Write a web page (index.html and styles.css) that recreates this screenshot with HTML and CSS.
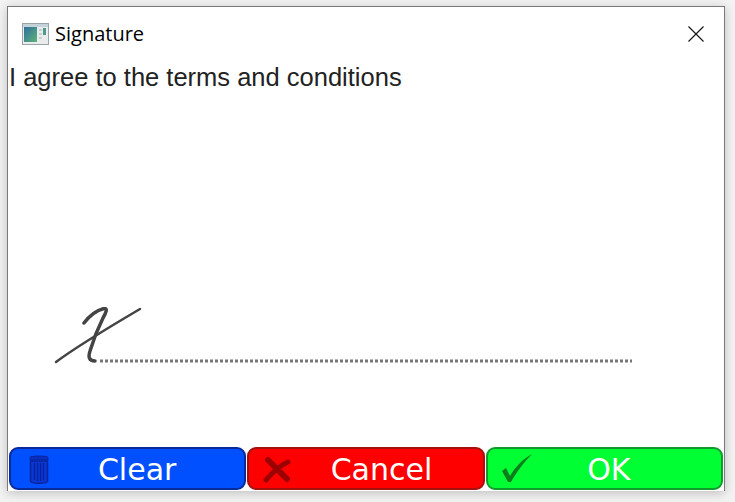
FILE: index.html
```html
<!DOCTYPE html>
<html lang="en">
<head>
<meta charset="utf-8">
<title>Signature</title>
<link rel="stylesheet" href="styles.css">
</head>
<body>
<main class="window">
  <header class="titlebar">
    <svg class="app-icon" viewBox="0 0 27 22" width="27" height="22" aria-hidden="true">
      <defs>
        <linearGradient id="pane" x1="0" y1="0" x2="1" y2="1">
          <stop offset="0" stop-color="#2f6f9c"/>
          <stop offset="1" stop-color="#5fb07a"/>
        </linearGradient>
      </defs>
      <rect x="0.5" y="0.5" width="26" height="21" fill="#e8ecec" stroke="#9aa3a8"/>
      <rect x="1" y="1" width="25" height="3" fill="#c4d2da"/>
      <rect x="2" y="4" width="13" height="15" fill="url(#pane)"/>
      <path d="M17 6h3v2h-3zM17 10h3v2h-3zM17 14h3v2h-3z" fill="#c9cfcf"/>
      <rect x="21" y="5" width="3" height="7" fill="#4f9a8a"/>
    </svg>
    <span class="title">Signature</span>
    <svg class="close" viewBox="0 0 16 16" width="16" height="16" aria-hidden="true">
      <path d="M0.5 0.5L15.5 15.5M15.5 0.5L0.5 15.5" stroke="#111" stroke-width="1.1" fill="none"/>
    </svg>
  </header>
  <p class="terms">I agree to the terms and conditions</p>
  <div class="signature">
    <svg viewBox="0 0 590 60" width="590" height="60" aria-hidden="true">
      <line x1="54" y1="54" x2="586" y2="54" class="dots"/>
      <path d="M10 55C30 40 60 22 94 2" class="ink"/>
      <path d="M38 16C44 8 52 3 58 1.500C62 1 60 6 57 11C52 21 47 34 44 44C42 50 43 54 49 54" class="ink ink-bold"/>
    </svg>
  </div>
  <footer class="actions">
    <button class="btn btn-clear" type="button">
      <svg class="btn-icon" viewBox="0 0 22 32" width="22" height="32" aria-hidden="true">
        <path d="M2 4.500C2 2.500 20 2.500 20 4.500V7H2Z" fill="#0a2fc0" stroke="#0823a0"/>
        <path d="M2.500 8H19.500V28C19.500 31 2.500 31 2.500 28Z" fill="#0a37d0" stroke="#08249c" stroke-width="1.500"/>
        <path d="M6.500 10V27M9.500 10V28M12.500 10V28M15.500 10V27" stroke="#0621a0" stroke-width="1.200"/>
      </svg>
      <span>Clear</span>
    </button>
    <button class="btn btn-cancel" type="button">
      <svg class="btn-icon" viewBox="0 0 32 28" width="32" height="28" aria-hidden="true">
        <path d="M7 5C12 10 20 18 26 24" stroke="#9c0000" stroke-width="6" stroke-linecap="round" fill="none"/>
        <path d="M27 7C20 10 11 18 5 25" stroke="#9c0000" stroke-width="5" stroke-linecap="round" fill="none"/>
      </svg>
      <span>Cancel</span>
    </button>
    <button class="btn btn-ok" type="button">
      <svg class="btn-icon" viewBox="0 0 32 32" width="32" height="32" aria-hidden="true">
        <path d="M1 18L5 15L9 23C14 14 22 6 31 1C23 9 15 20 10 29L7 29Z" fill="#0a7d1c"/>
      </svg>
      <span>OK</span>
    </button>
  </footer>
</main>
</body>
</html>
```
FILE: styles.css
```css
* { box-sizing: border-box; }
html, body { height: 100%; }
body {
  margin: 0;
  padding: 6px 10px 11px 7px;
  background: #f3f3f3;
  overflow: hidden;
}
.window {
  height: 485px;
  display: flex;
  flex-direction: column;
  background: #fff;
  border: 1px solid #7a7a7a;
  border-bottom: 0;
  box-shadow: 0 2px 10px rgba(0, 0, 0, 0.22);
}
.titlebar {
  display: flex;
  align-items: center;
  height: 54px;
  flex: none;
  padding: 0 20px 0 14px;
}
.app-icon { flex: none; }
.title {
  margin-left: 6px;
  font: 20px/26px "Open Sans", "Noto Sans", sans-serif;
  color: #000;
  flex: 1;
}
.close { flex: none; }
.terms {
  margin: 0;
  padding-left: 1px;
  font: 25.500px/32px "Liberation Sans", Arial, sans-serif;
  color: #222;
  flex: none;
}
.signature {
  flex: 1;
  display: flex;
  align-items: flex-end;
  padding: 0 0 80px 38px;
}
.signature svg { display: block; }
.dots {
  stroke: #777;
  stroke-width: 3;
  stroke-dasharray: 3 2;
}
.ink {
  fill: none;
  stroke: #444;
  stroke-width: 2.500;
  stroke-linecap: round;
}
.ink-bold { stroke-width: 3.500; }
.actions {
  display: grid;
  grid-template-columns: repeat(3, 1fr);
  flex: none;
  gap: 1px;
  padding: 0 1px 1px;
}
.btn {
  position: relative;
  height: 43px;
  padding: 2px 0 0 19px;
  border: 2px solid;
  border-radius: 9px;
  font: 30px/1 "DejaVu Sans", Verdana, sans-serif;
  color: #fff;
  display: flex;
  align-items: center;
  justify-content: center;
}
.btn-icon {
  position: absolute;
  top: 50%;
  transform: translateY(-50%);
}
.btn-clear { background: #0050ff; border-color: #0a2a9c; }
.btn-clear .btn-icon { left: 17px; }
.btn-cancel { background: #ff0000; border-color: #a51111; padding-left: 31px; }
.btn-cancel .btn-icon { left: 12px; }
.btn-ok { background: #00ff33; border-color: #129a2c; padding-left: 9px; }
.btn-ok .btn-icon { left: 13px; }
```
